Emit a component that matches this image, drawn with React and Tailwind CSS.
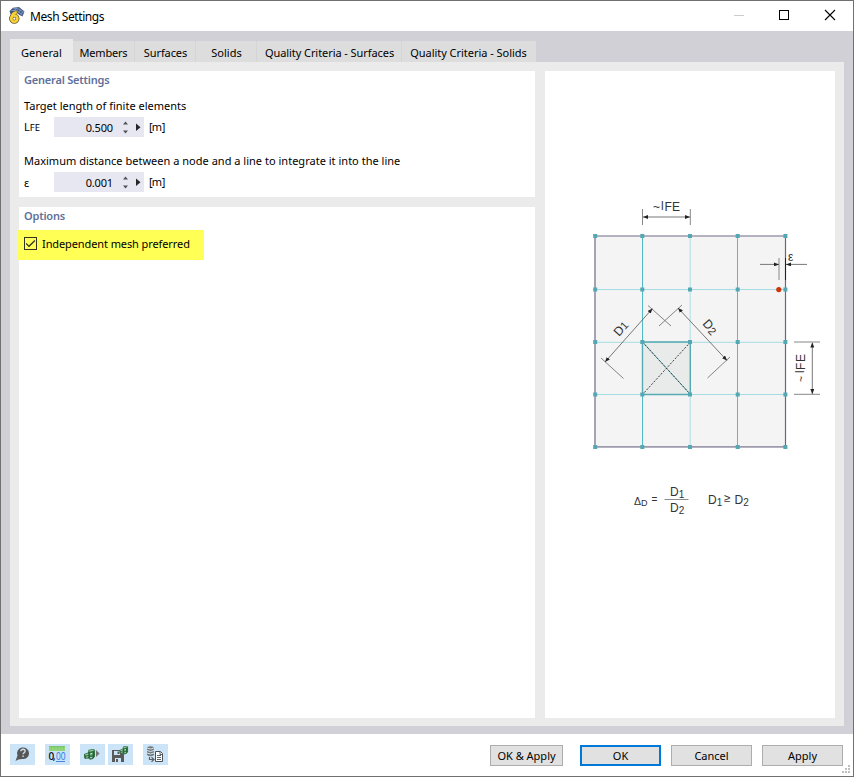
import React from "react";

const tabs = [
  { label: "General", width: "w-[63px] h-[23px] bg-[#ebebeb] pt-[3px]", track: "tracking-[0.05px]" },
  { label: "Members", width: "w-[62px] h-[21px] bg-[#dddddd] pt-[2px] border-r border-[#d5d5d6]", track: "tracking-[-0.2px]" },
  { label: "Surfaces", width: "w-[61px] h-[21px] bg-[#dddddd] pt-[2px] pl-px border-r border-[#d5d5d6]", track: "tracking-[-0.1px]" },
  { label: "Solids", width: "w-[61px] h-[21px] bg-[#dddddd] pt-[2px] pl-px border-r border-[#d5d5d6]", track: "tracking-[0px]" },
  { label: "Quality Criteria - Surfaces", width: "w-[145px] h-[21px] bg-[#dddddd] pt-[2px] pl-px border-r border-[#d5d5d6]", track: "tracking-[-0.07px]" },
  { label: "Quality Criteria - Solids", width: "w-[134px] h-[21px] bg-[#dddddd] pt-[2px] pr-px", track: "tracking-[-0.03px]" },
];

function AppIcon() {
  return (
    <svg width="17" height="18" viewBox="0 0 17 18">
      <path d="M1.5 4L5 .8L11 0L16.5 4.5L14.5 9.5L11.5 8L9 6L2.5 7.5Z" fill="#465b80" />
      <path d="M5.5 1.5L11 2L15.5 5.5M3.5 3.5L9 3.5L14.5 8M9 .8L6 4M13 2.5L10.5 5.5M15.5 4.5L12.5 7" fill="none" stroke="#86a3d3" strokeWidth=".8" />
      <path d="M9 5.2Q4 5.8 3.2 11.5" fill="none" stroke="#66582c" strokeWidth="3.6" />
      <circle cx="6.3" cy="11.6" r="3.2" fill="none" stroke="#66582c" strokeWidth="4" />
      <path d="M8.8 5.2Q4 6 3.4 11.3" fill="none" stroke="#f6d238" strokeWidth="2.5" />
      <circle cx="6.3" cy="11.6" r="3.1" fill="none" stroke="#f6d238" strokeWidth="2.6" />
    </svg>
  );
}

function Field({ label, value }) {
  return (
    <div className="flex h-5 items-center pl-[5px]">
      <span className="w-[30px]">{label}</span>
      <div className="flex h-5 w-[90px] items-center bg-[#e7e7f1]">
        <span className="w-[59px] pt-px text-right tracking-[-0.15px]">{value}</span>
        <svg width="31" height="20" viewBox="0 0 31 20">
          <path d="M10 7.5L12.5 4.5L15 7.5Z M10 13.5L12.5 16.5L15 13.5Z" fill="#505054" />
          <path d="M23 6.5L27.5 10.3L23 14Z" fill="#27272a" />
        </svg>
      </div>
      <span className="-mt-px ml-[5px] tracking-[-0.9px]">[<span className="tracking-[-0.3px]">m</span>]</span>
    </div>
  );
}

const xs = [595.2, 642.3, 690, 737.7, 785.4];
const ys = [236, 289.5, 342, 394.5, 447];

function Diagram() {
  return (
    <svg width="290" height="647" viewBox="545 71 290 647" fontFamily="'Liberation Sans', Arial, sans-serif" fill="#333">
      <defs>
        <marker id="arrow" viewBox="0 0 5 4" markerWidth="5" markerHeight="4" markerUnits="userSpaceOnUse" refX="5" refY="2" orient="auto-start-reverse">
          <path d="M0 0L5 2L0 4Z" fill="#222" />
        </marker>
      </defs>
      <rect x="595" y="236" width="190.5" height="211" fill="#f4f4f4" />
      <rect x="642.3" y="342" width="48" height="52.5" fill="#e9ebeb" />
      <g fill="none">
        <path d="M595 289.5H785M595 342.3H785M595 394.5H785" stroke="#a5dbe2" />
        <path d="M642.5 236V447" stroke="#50bac5" />
        <path d="M690.2 236V447" stroke="#c7e6ea" strokeWidth="1.6" />
        <path d="M737.5 236V447" stroke="#66b5bd" />
        <path d="M594.5 236H785.5M594.5 446.8H785.5" stroke="#9d9bad" strokeWidth="1.7" />
        <path d="M595 236V447" stroke="#9694a7" strokeWidth="1.7" />
        <path d="M785.5 236V447" stroke="#69677b" strokeWidth="1.2" />
        <path d="M642.5 342H690.3V394.5H642.5Z" stroke="#55aab4" strokeWidth="1.4" />
        <path d="M642.5 342L690.5 394.5" stroke="#61b4bb" strokeWidth="1" />
        <path d="M642.5 342L690.5 394.5M690.5 342L642.5 394.5" stroke="#363c3d" strokeWidth="1" strokeDasharray="2 1.5" />
        <path d="M642.5 209V225M690.3 209V225M779 258V280M794 342H820M794 394.3H820" stroke="#888" />
        <path d="M785.5 258V280" stroke="#222" />
        <path d="M648 305.5L671 326M682 305L659 326M601 358L623.5 378.5M730 357L707.5 378" stroke="#777" strokeWidth=".9" />
        <g stroke="#606060" strokeWidth=".85" markerEnd="url(#arrow)">
          <path d="M643 217H690" markerStart="url(#arrow)" />
          <path d="M812.3 342.5V394" markerStart="url(#arrow)" />
          <path d="M652.5 308.5L605 362" markerStart="url(#arrow)" />
          <path d="M678 308L727 360.5" markerStart="url(#arrow)" />
          <path d="M760 264.4H779" />
          <path d="M807 264.4H786" />
        </g>
      </g>
      {xs.flatMap((x) => ys.map((y) => (
        <rect key={x + "-" + y} x={x - 2} y={y - 2} width="4" height="4" fill="#53a8b4" />
      )))}
      <circle cx="778.8" cy="289.6" r="2.6" fill="#cb3507" />
      <text x="653" y="211" fontSize="12">~</text>
      <text x="661" y="209.5" fontSize="12">l</text>
      <text x="664.5" y="211" fontSize="12" textLength="15.5">FE</text>
      <text x="788" y="261" fontSize="12">ε</text>
      <g transform="translate(805 382) rotate(-90)">
        <text x="0" y="0" fontSize="10">~</text>
        <text x="9" y="-1" fontSize="12">l</text>
        <text x="12" y="0" fontSize="12" textLength="16">FE</text>
      </g>
      <text transform="translate(619 337) rotate(-48)" fontSize="12.5">D<tspan fontSize="11">1</tspan></text>
      <text transform="translate(702 324) rotate(48)" fontSize="12.5">D<tspan dy="1" fontSize="11">2</tspan></text>
      <text x="634" y="504.5" fontSize="10.5">Δ</text>
      <text x="641" y="506" fontSize="9">D</text>
      <text x="651.5" y="503" fontSize="10">=</text>
      <text x="670" y="496" fontSize="12">D<tspan dy="2" fontSize="10">1</tspan></text>
      <path d="M664.5 499.5H688.5" stroke="#8b8b8b" />
      <text x="670" y="512" fontSize="12">D<tspan dy="2" fontSize="10">2</tspan></text>
      <text x="708" y="503.5" fontSize="12">D<tspan dy="2" fontSize="10">1</tspan></text>
      <text x="724" y="502" fontSize="11.5">≥</text>
      <text x="734.5" y="503.5" fontSize="12">D<tspan dy="2" fontSize="10">2</tspan></text>
    </svg>
  );
}

function HelpIcon() {
  return (
    <svg width="25" height="21" viewBox="0 0 25 21">
      <path d="M5.5 17L7.5 11.5A6 5.8 0 1 1 12 15Q8 15 5.5 17Z" fill="#565656" />
      <path d="M10.8 7.2Q11 5.3 13.1 5.3Q15.2 5.5 15.1 7.2Q15 8.3 13.9 8.8Q13.1 9.3 13.1 10.3M13.1 11.5V13" fill="none" stroke="#d0dce6" strokeWidth="1.4" />
    </svg>
  );
}

function UnitsIcon() {
  return (
    <svg width="25" height="21" viewBox="0 0 25 21">
      <rect x="4" y="2" width="16" height="5" fill="#8fd67a" />
      <path d="M4 2.5H20" stroke="#78c567" />
      <path d="M6.5 3V5M9.5 3V4.5M12.5 3V5M15.5 3V4.5M18.5 3V5" stroke="#78c567" strokeWidth=".8" />
      <text x="3.5" y="15.8" fontSize="10" textLength="7" fontFamily="'Open Sans', sans-serif" fontWeight="600" fill="#101216">0,</text>
      <text x="11" y="15.8" fontSize="10" textLength="9.5" lengthAdjust="spacingAndGlyphs" fontFamily="'Open Sans', sans-serif" fill="#2f6fe0">00</text>
      <path d="M11 17.5H20" stroke="#4b83df" />
    </svg>
  );
}

function Cube() {
  return (
    <g>
      <path d="M0 5L4 3.5L4.5 .8L9.5 0L11 1V7.5L9 10L6 10.8L4.5 9.5L1 10L0 8.5Z" fill="#357548" />
      <path d="M4.5 1.8L9 .8L10.3 1.4L6 2.8Z M.8 5.6L4 4.4L5.3 5.2L2.2 6.6Z" fill="#93cba0" />
      <path d="M6 4H8.5V6.3H6Z" fill="#6fb580" />
      <path d="M5 3V9M9.3 2.5V9" fill="none" stroke="#1d5430" strokeWidth=".8" />
      <path d="M6.5 5L8.3 4.2M2.3 8.3L4.2 7.6M6 8.8L8.3 8.2" stroke="#cfe9d3" strokeWidth=".9" />
    </g>
  );
}

function ModelIcon() {
  return (
    <svg width="25" height="21" viewBox="0 0 25 21">
      <g transform="translate(4 5)"><Cube /></g>
      <path d="M16 6L19.6 9.5L16 13Z" fill="#777" />
    </svg>
  );
}

function SaveIcon() {
  return (
    <svg width="25" height="21" viewBox="0 0 25 21">
      <path d="M4 6H15L16 7V18H4Z" fill="#595959" />
      <path d="M6 7H12V11H6ZM7 14H13V18H7Z" fill="#cce4f7" />
      <path d="M9.5 7.5H11.5V10H9.5ZM8 15H10V18H8Z" fill="#595959" />
      <g transform="translate(11.5 2) scale(.78)"><Cube /></g>
    </svg>
  );
}

function DatabaseIcon() {
  return (
    <svg width="25" height="21" viewBox="0 0 25 21">
      <path d="M4 3.5Q7.5 1 11 3.5V11Q7.5 13.5 4 11Z" fill="#777" />
      <path d="M4 4Q7.5 6 11 4M4 6.5Q7.5 8.5 11 6.5M4 9Q7.5 11 11 9" fill="none" stroke="#d1e7f8" />
      <path d="M6.5 13V15.5H11M8.5 13.3L11 15.5L8.5 17.7" fill="none" stroke="#5d6165" strokeWidth="1.2" />
      <path d="M12.5 7.5H17.5L19.5 9.5V17.5H12.5Z" fill="#fff" stroke="#4b5055" />
      <path d="M17 8V10.5H19M14 11.5H18M14 13.5H18M14 15.5H18" fill="none" stroke="#4b5055" strokeWidth=".9" />
    </svg>
  );
}

function ToolButton({ children, label, gap = "mr-[10px]" }) {
  return <button aria-label={label} className={"h-[21px] w-[25px] shrink-0 bg-[#cce4f7] " + gap}>{children}</button>;
}

export default function App() {
  return (
    <div className="flex h-[777px] w-[854px] flex-col overflow-hidden border border-[#707070] bg-white font-['Noto_Sans','Open_Sans',sans-serif] text-[11px] leading-[15px] text-black">
      <header className="flex h-[30px] shrink-0 items-center pl-[7px]">
        <AppIcon />
        <h1 className="ml-[5px] grow text-[12px] tracking-[-0.42px]">Mesh Settings</h1>
        <svg width="124" height="30" viewBox="729 1 124 30" fill="none" shapeRendering="crispEdges">
          <path d="M734 15.5H744" stroke="#ccc" />
          <rect x="779.5" y="10.5" width="9" height="9" stroke="#000" />
          <path d="M825 10L835 20M835 10L825 20" stroke="#000" strokeWidth="1.1" shapeRendering="auto" />
        </svg>
      </header>

      <main className="flex h-[703px] shrink-0 flex-col bg-[#d1d0d6] px-[9px] pt-[9px] pb-2">
        <nav className="flex h-[22px] shrink-0 items-end">
          {tabs.map((t) => (
            <button key={t.label} className={"shrink-0 whitespace-nowrap text-center " + t.width + " " + t.track}>{t.label}</button>
          ))}
        </nav>
        <div className="flex h-[664px] gap-[10px] bg-[#ebebeb] px-[9px] pt-[9px] pb-2">
          <div className="flex w-[516px] flex-col gap-[10px]">
            <section className="h-[126px] bg-white pt-px">
              <h2 className="pl-[5px] font-semibold tracking-[-0.2px] text-[#60709a]">General Settings</h2>
              <p className="mt-[11px] pl-[5px]">Target length of finite elements</p>
              <div className="mt-[4px]">
                <Field label={<>L<span className="text-[9.5px]">FE</span></>} value="0.500" />
              </div>
              <p className="mt-[16px] pl-[5px] tracking-[0.015px]">Maximum distance between a node and a line to integrate it into the line</p>
              <div className="mt-[4px]"><Field label="ε" value="0.001" /></div>
            </section>
            <section className="grow bg-white pt-px">
              <h2 className="pl-[5px] font-semibold tracking-[-0.2px] text-[#60709a]">Options</h2>
              <div className="-ml-[2px] mt-[7px] flex h-[30px] w-[187px] items-center bg-[#ffff55] pl-[7px]">
                <svg width="13" height="13" viewBox="0 0 13 13" fill="none" className="-mt-[3px]">
                  <rect x=".5" y=".5" width="12" height="12" stroke="#333321" />
                  <path d="M2.2 6.5L5 9.3L10.9 3.5" stroke="#333321" strokeWidth="1.2" />
                </svg>
                <span className="-mt-[4px] ml-[5px] tracking-[-0.1px]">Independent mesh preferred</span>
              </div>
            </section>
          </div>
          <aside className="h-[647px] w-[290px] bg-white"><Diagram /></aside>
        </div>
      </main>

      <footer className="flex h-[42px] shrink-0 items-start pl-[9px] pt-[10px]">
        <ToolButton label="Help"><HelpIcon /></ToolButton>
        <ToolButton label="Units"><UnitsIcon /></ToolButton>
        <ToolButton label="Model" gap="mr-[3px]"><ModelIcon /></ToolButton>
        <ToolButton label="Save"><SaveIcon /></ToolButton>
        <ToolButton label="Database"><DatabaseIcon /></ToolButton>
        <div className="ml-[312px] mt-px flex">
          <button className="mr-[17px] h-[21px] w-[73px] border border-[#adadad] bg-[#e1e1e1]">OK &amp; Apply</button>
          <button className="mr-[10px] h-[21px] w-[81px] border-2 border-[#0078d7] bg-[#e1e1e1]">OK</button>
          <button className="mr-[10px] h-[21px] w-[81px] border border-[#adadad] bg-[#e1e1e1]">Cancel</button>
          <button className="h-[21px] w-[81px] border border-[#adadad] bg-[#e1e1e1]">Apply</button>
        </div>
        <svg width="9" height="9" viewBox="0 0 9 9" className="mt-[21px] -ml-px shrink-0" fill="#bfbfbf">
          <path d="M6 0H8V2H6ZM3 3H5V5H3ZM6 3H8V5H6ZM0 6H2V8H0ZM3 6H5V8H3ZM6 6H8V8H6Z" />
        </svg>
      </footer>
    </div>
  );
}
